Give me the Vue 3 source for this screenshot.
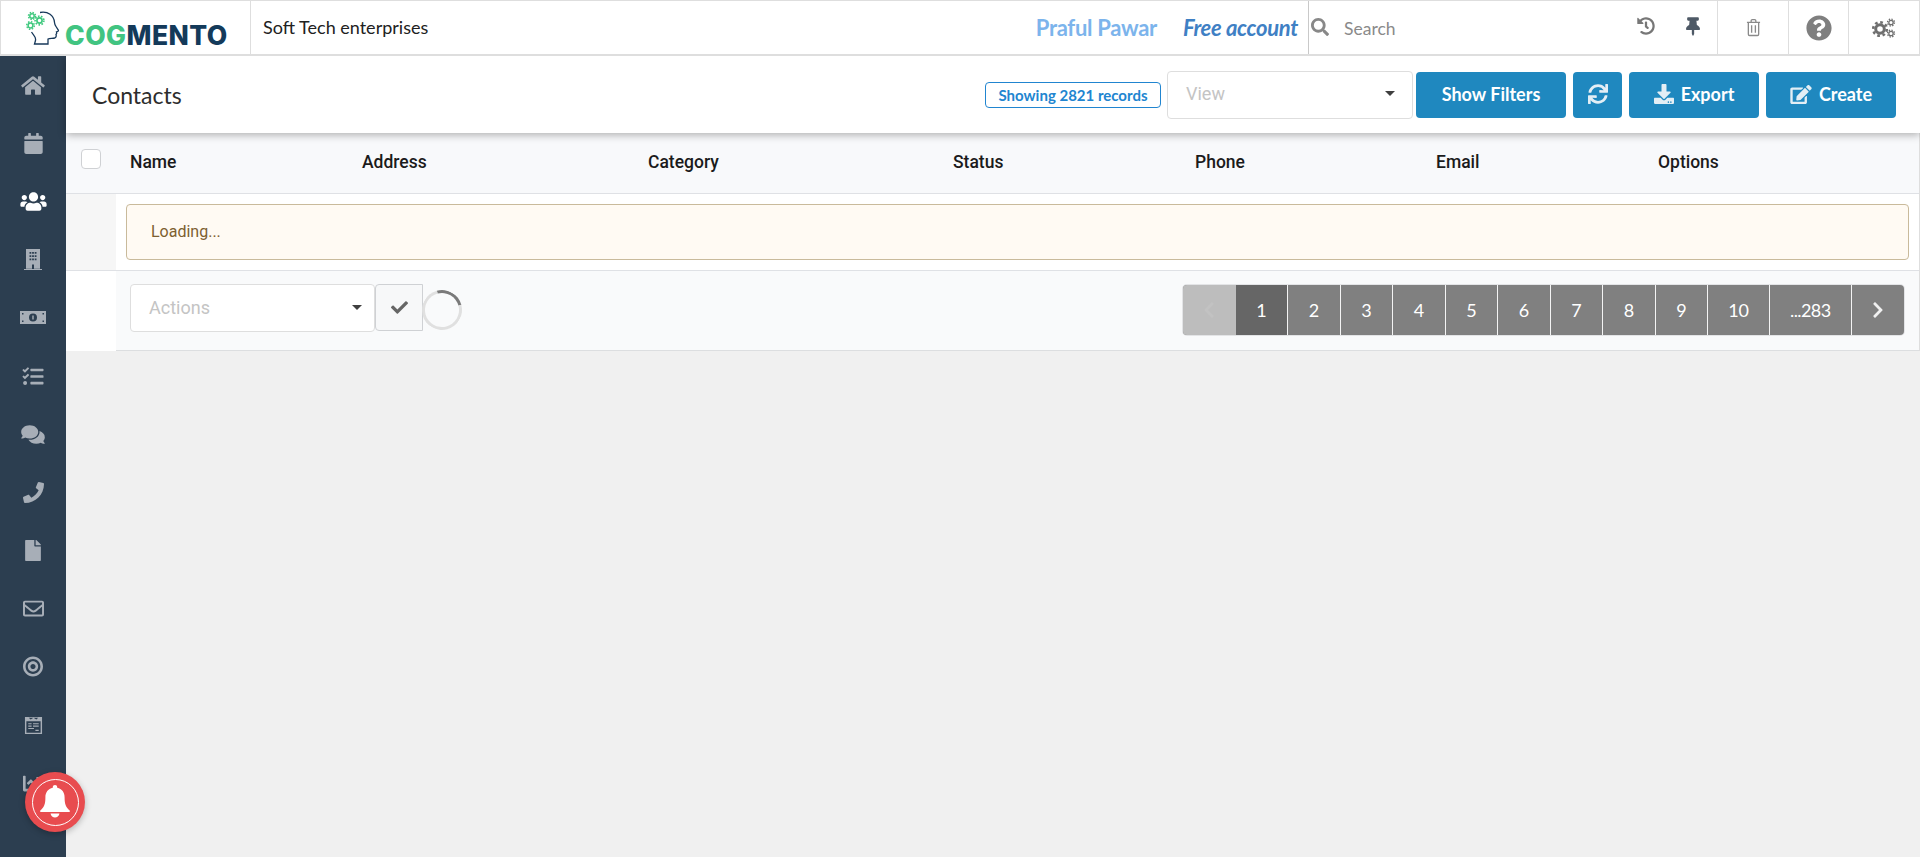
<script setup>
const columns = [
  { name: 'Name' }, { name: 'Address' }, { name: 'Category' }, { name: 'Status' },
  { name: 'Phone' }, { name: 'Email' }, { name: 'Options' }
]
const pages = ['1', '2', '3', '4', '5', '6', '7', '8', '9', '10', '...283']
const nav = [
  { vb: '0 0 576 512', w: 26, d: 'M280.37 148.26L96 300.11V464a16 16 0 0 0 16 16l112.06-.29a16 16 0 0 0 15.92-16V368a16 16 0 0 1 16-16h64a16 16 0 0 1 16 16v95.64a16 16 0 0 0 16 16.05L464 480a16 16 0 0 0 16-16V300L295.67 148.26a12.19 12.19 0 0 0-15.3 0zM571.6 251.47L488 182.56V44.05a12 12 0 0 0-12-12h-56a12 12 0 0 0-12 12v72.61L318.47 43a48 48 0 0 0-61 0L4.34 251.47a12 12 0 0 0-1.6 16.9l25.5 31A12 12 0 0 0 45.15 301l235.22-193.74a12.19 12.19 0 0 1 15.3 0L530.9 301a12 12 0 0 0 16.9-1.6l25.5-31a12 12 0 0 0-1.7-16.93z' },
  { vb: '0 0 448 512', w: 19, d: 'M12 192h424c6.6 0 12 5.4 12 12v260c0 26.5-21.5 48-48 48H48c-26.5 0-48-21.5-48-48V204c0-6.6 5.4-12 12-12zm436-44v-36c0-26.5-21.5-48-48-48h-48V12c0-6.6-5.4-12-12-12h-40c-6.6 0-12 5.4-12 12v52H160V12c0-6.6-5.4-12-12-12h-40c-6.6 0-12 5.4-12 12v52H48C21.5 64 0 85.5 0 112v36c0 6.6 5.4 12 12 12h424c6.6 0 12-5.4 12-12z' },
  { vb: '0 0 640 512', w: 27, active: true, d: 'M96 224c35.3 0 64-28.7 64-64s-28.7-64-64-64-64 28.7-64 64 28.7 64 64 64zm448 0c35.3 0 64-28.7 64-64s-28.7-64-64-64-64 28.7-64 64 28.7 64 64 64zm32 32h-64c-17.6 0-33.5 7.1-45.1 18.6 40.3 22.1 68.9 62 75.1 109.4h66c17.7 0 32-14.3 32-32v-32c0-35.3-28.7-64-64-64zm-256 0c61.9 0 112-50.1 112-112S381.9 32 320 32 208 82.1 208 144s50.1 112 112 112zm76.8 32h-8.3c-20.8 10-43.9 16-68.5 16s-47.6-6-68.5-16h-8.3C179.6 288 128 339.6 128 403.2V432c0 26.5 21.5 48 48 48h288c26.5 0 48-21.5 48-48v-28.8c0-63.6-51.6-115.2-115.2-115.2zm-223.7-13.4C161.5 263.1 145.6 256 128 256H64c-35.3 0-64 28.7-64 64v32c0 17.7 14.3 32 32 32h65.9c6.3-47.4 34.9-87.3 75.2-109.4z' },
  { vb: '0 0 18 21', w: 18, rule: 'evenodd', d: 'M2 0h14v19.800H2zM5.500 3h1.800v1.800H5.500zM8.100 3h1.800v1.800H8.100zM10.700 3h1.800v1.800h-1.800zM5.500 6.200h1.800V8H5.500zM8.100 6.200h1.800V8H8.100zM10.700 6.200h1.800V8h-1.800zM5.500 9.400h1.800v1.800H5.500zM8.100 9.400h1.800v1.800H8.100zM10.700 9.400h1.800v1.800h-1.800zM8 15.500h2v4.300H8zM0 20h18v1H0z' },
  { vb: '0 0 26 13', w: 26, rule: 'evenodd', d: 'M0 0h26v13H0zM13 2.500a4 4 0 1 0 0 8 4 4 0 0 0 0-8zM12.300 4.500h1.400v4h-1.400zM2 2h1.500v1.500H2zM22.500 2H24v1.500h-1.500zM2 9.500h1.500V11H2zM22.500 9.500H24V11h-1.500z' },
  { vb: '0 0 512 512', w: 22, d: 'M139.61 35.5a12 12 0 0 0-17 0L58.93 98.81l-22.7-22.12a12 12 0 0 0-17 0L3.53 92.41a12 12 0 0 0 0 17l47.59 47.4a12.78 12.78 0 0 0 17.61 0l15.59-15.62L156.52 69a12.09 12.09 0 0 0 .09-17zm0 159.19a12 12 0 0 0-17 0l-63.68 63.72-22.7-22.1a12 12 0 0 0-17 0L3.53 252a12 12 0 0 0 0 17L51 316.5a12.77 12.77 0 0 0 17.6 0l15.7-15.69 72.2-72.22a12 12 0 0 0 .09-16.9zM64 368c-26.49 0-48.59 21.5-48.59 48S37.53 464 64 464a48 48 0 0 0 0-96zm432 16H208a16 16 0 0 0-16 16v32a16 16 0 0 0 16 16h288a16 16 0 0 0 16-16v-32a16 16 0 0 0-16-16zm0-320H208a16 16 0 0 0-16 16v32a16 16 0 0 0 16 16h288a16 16 0 0 0 16-16V80a16 16 0 0 0-16-16zm0 160H208a16 16 0 0 0-16 16v32a16 16 0 0 0 16 16h288a16 16 0 0 0 16-16v-32a16 16 0 0 0-16-16z' },
  { vb: '0 0 576 512', w: 24, d: 'M416 192c0-88.4-93.1-160-208-160S0 103.6 0 192c0 34.3 14.1 65.9 38 92-13.4 30.2-35.5 54.2-35.8 54.5-2.2 2.3-2.8 5.7-1.5 8.7S4.8 352 8 352c36.6 0 66.9-12.3 88.7-25 32.2 15.7 70.3 25 111.3 25 114.9 0 208-71.6 208-160zm122 220c23.9-26 38-57.7 38-92 0-66.9-53.5-124.2-129.3-148.1.9 6.6 1.3 13.3 1.3 20.1 0 105.9-107.7 192-240 192-10.8 0-21.3-.8-31.7-1.9C207.8 439.6 281.8 480 368 480c41 0 79.1-9.2 111.3-25 21.8 12.7 52.1 25 88.7 25 3.2 0 6.1-1.9 7.3-4.8 1.3-2.9.7-6.3-1.5-8.7-.3-.3-22.4-24.2-35.8-54.5z' },
  { vb: '0 0 512 512', w: 21, d: 'M493.4 24.6l-104-24c-11.3-2.6-22.9 3.3-27.5 13.9l-48 112c-4.2 9.8-1.4 21.3 6.9 28l60.6 49.6c-36 76.7-98.9 140.5-177.2 177.2l-49.6-60.6c-6.8-8.3-18.2-11.1-28-6.9l-112 48C3.9 366.5-2 378.1.6 389.4l24 104C27.1 504.2 36.7 512 48 512c256.1 0 464-207.5 464-464 0-11.2-7.7-20.9-18.6-23.4z' },
  { vb: '0 0 384 512', w: 16, d: 'M224 136V0H24C10.7 0 0 10.7 0 24v464c0 13.3 10.7 24 24 24h336c13.3 0 24-10.7 24-24V160H248c-13.2 0-24-10.8-24-24zm160-14.1v6.1H256V0h6.1c6.4 0 12.5 2.5 17 7l97.9 98c4.5 4.5 7 10.6 7 16.9z' },
  { vb: '0 0 512 512', w: 21, d: 'M464 64H48C21.49 64 0 85.49 0 112v288c0 26.51 21.49 48 48 48h416c26.51 0 48-21.49 48-48V112c0-26.51-21.49-48-48-48zm0 48v40.805c-22.422 18.259-58.168 46.651-134.587 106.49-16.841 13.247-50.201 45.072-73.413 44.701-23.208.375-56.579-31.459-73.413-44.701C106.18 199.465 70.425 171.067 48 152.805V112h416zM48 400V214.398c22.914 18.251 55.409 43.862 104.938 82.646 21.857 17.205 60.134 55.186 103.062 54.955 42.717.231 80.509-37.199 103.053-54.947 49.528-38.783 82.032-64.401 104.947-82.653V400H48z' },
  { vb: '0 0 496 512', w: 20, d: 'M248 8C111.03 8 0 119.03 0 256s111.03 248 248 248 248-111.03 248-248S384.97 8 248 8zm0 432c-101.69 0-184-82.29-184-184 0-101.69 82.29-184 184-184 101.69 0 184 82.29 184 184 0 101.69-82.29 184-184 184zm0-312c-70.69 0-128 57.31-128 128s57.31 128 128 128 128-57.31 128-128-57.31-128-128-128zm0 192c-35.29 0-64-28.71-64-64s28.71-64 64-64 64 28.71 64 64-28.71 64-64 64z' },
  { vb: '0 0 20 20', w: 19, rule: 'evenodd', d: 'M1 1h18v18H1zM2.500 5.500h15v12h-15zM5 1.800l2 1.800 3-1.800 3 1.800 2-1.800zM4.500 7.500h3.500v1.200H4.500zM9.500 7.500h6v1.200h-6zM4.500 10h3.500v1.200H4.500zM9.500 10h6v1.200h-6zM4.500 12.500h6v1.200h-6zM12 14.500h3.500v1.200H12z' },
  { vb: '0 0 512 512', w: 21, d: 'M496 384H64V80c0-8.840-7.160-16-16-16H16C7.160 64 0 71.160 0 80v336c0 17.670 14.330 32 32 32h464c8.840 0 16-7.160 16-16v-32c0-8.840-7.160-16-16-16zM464 96H345.940c-21.380 0-32.090 25.850-16.970 40.970l32.400 32.400L288 242.750l-73.370-73.370c-12.500-12.500-32.760-12.500-45.250 0l-68.690 68.690c-6.250 6.250-6.250 16.380 0 22.630l22.620 22.620c6.250 6.250 16.380 6.250 22.630 0L192 237.250l73.370 73.370c12.500 12.500 32.760 12.500 45.250 0l96-96 32.400 32.400c15.120 15.120 40.970 4.410 40.970-16.970V112c.010-8.840-7.150-16-15.990-16z' }
]
</script>

<template>
  <div class="page">
    <header class="topbar">
      <div class="brand">
        <svg class="head" viewBox="0 0 34 34" width="34" height="34" aria-hidden="true">
          <path d="M14 1.500c8-1.500 14 3 14.500 10 .1 1.500.6 2.600 1.500 4l2.300 3.600c.4.700 0 1.300-1.800 1.800.4 1 .3 1.800-.5 2.300.5 1.400.1 3.400-1.200 3.800-2.300.6-5.300.1-6.800 1v5H8.500l1-3.500c.3-1.600 0-3-1.300-4.600L5.500 21" fill="none" stroke="#17385a" stroke-width="1.300"/>
          <g fill="none" stroke="#41c97f">
            <circle cx="6" cy="5" r="2.200" stroke-width="1.500"/>
            <circle cx="6" cy="5" r="3.500" stroke-width="1.500" stroke-dasharray="1.500 1.250"/>
            <circle cx="13.500" cy="9.500" r="2.600" stroke-width="1.700"/>
            <circle cx="13.500" cy="9.500" r="4.400" stroke-width="1.600" stroke-dasharray="1.600 1.500"/>
            <circle cx="4.500" cy="14.500" r="2.400" stroke-width="1.500"/>
            <circle cx="4.500" cy="14.500" r="3.800" stroke-width="1.500" stroke-dasharray="1.500 1.480"/>
          </g>
        </svg>
        <span class="wordmark"><span class="cog">COG</span><span class="mento">MENTO</span></span>
      </div>
      <div class="company">Soft Tech enterprises</div>
      <div class="user">Praful Pawar</div>
      <div class="plan">Free account</div>
      <div class="search">
        <svg class="search-icon" viewBox="0 0 512 512" width="18" height="18" aria-hidden="true"><path d="M505 442.700L405.300 343c-4.500-4.500-10.600-7-17-7H372c27.600-35.300 44-79.700 44-128C416 93.100 322.900 0 208 0S0 93.100 0 208s93.100 208 208 208c48.300 0 92.700-16.400 128-44v16.300c0 6.400 2.500 12.500 7 17l99.700 99.700c9.400 9.400 24.600 9.400 33.900 0l28.300-28.300c9.400-9.400 9.400-24.600.1-34zM208 336c-70.700 0-128-57.200-128-128 0-70.700 57.200-128 128-128 70.700 0 128 57.200 128 128 0 70.700-57.200 128-128 128z"/></svg>
        <span class="search-text">Search</span>
        <svg class="history" viewBox="0 0 512 512" width="18" height="18" aria-hidden="true"><path d="M504 255.531c.253 136.640-111.180 248.372-247.820 248.468-59.015.042-113.223-20.530-155.822-54.911-11.077-8.940-11.905-25.541-1.839-35.607l11.267-11.267c8.609-8.609 22.353-9.551 31.891-1.984C173.062 425.135 212.781 440 256 440c101.705 0 184-82.311 184-184 0-101.705-82.311-184-184-184-48.814 0-93.149 18.969-126.068 49.932l50.754 50.754c10.080 10.080 2.941 27.314-11.313 27.314H24c-8.837 0-16-7.163-16-16V38.627c0-14.254 17.234-21.393 27.314-11.314l49.372 49.372C129.209 34.136 189.552 8 256 8c136.810 0 247.747 110.780 248 247.531zm-180.912 78.784l9.823-12.630c8.138-10.463 6.253-25.542-4.210-33.679L288 256.349V152c0-13.255-10.745-24-24-24h-16c-13.255 0-24 10.745-24 24v135.651l65.409 50.874c10.463 8.137 25.541 6.253 33.679-4.210z"/></svg>
        <svg class="pin" viewBox="0 0 384 512" width="14" height="19" aria-hidden="true"><path d="M298.028 214.267L285.793 96H328c13.255 0 24-10.745 24-24V24c0-13.255-10.745-24-24-24H56C42.745 0 32 10.745 32 24v48c0 13.255 10.745 24 24 24h42.207L85.972 214.267C37.465 236.820 0 277.261 0 328c0 13.255 10.745 24 24 24h136v104.007c0 1.242.289 2.467.845 3.578l24 48c2.941 5.882 11.364 5.893 14.311 0l24-48a8.008 8.008 0 0 0 .845-3.578V352h136c13.255 0 24-10.745 24-24-.001-51.183-37.983-91.420-85.973-113.733z"/></svg>
      </div>
      <div class="tool tool-trash">
        <svg viewBox="0 0 16 20" width="15" height="19" fill="none" stroke="#8a8a8a" stroke-width="1.400" aria-hidden="true"><path d="M1 4.500h14M5.500 4.500V2.800c0-.8.500-1.300 1.300-1.300h2.400c.8 0 1.300.5 1.300 1.300v1.700M2.500 4.500v12.700c0 .8.500 1.300 1.300 1.300h8.400c.8 0 1.300-.5 1.300-1.300V4.500M6 7.500v8M10 7.500v8"/></svg>
      </div>
      <div class="tool tool-help">
        <svg viewBox="0 0 512 512" width="26" height="26" fill="#7f7f7f" aria-hidden="true"><path d="M504 256c0 136.997-111.043 248-248 248S8 392.997 8 256C8 119.083 119.043 8 256 8s248 111.083 248 248zM262.655 90c-54.497 0-89.255 22.957-116.549 63.758-3.536 5.286-2.353 12.415 2.715 16.258l34.699 26.310c5.205 3.947 12.621 3.008 16.665-2.122 17.864-22.658 30.113-35.797 57.303-35.797 20.429 0 45.698 13.148 45.698 32.958 0 14.976-12.363 22.667-32.534 33.976C247.128 238.528 216 254.941 216 296v4c0 6.627 5.373 12 12 12h56c6.627 0 12-5.373 12-12v-1.333c0-28.462 83.186-29.647 83.186-106.667 0-58.002-60.165-102-116.531-102zM256 338c-25.365 0-46 20.635-46 46 0 25.364 20.635 46 46 46s46-20.636 46-46c0-25.365-20.635-46-46-46z"/></svg>
      </div>
      <div class="tool tool-cogs">
        <svg viewBox="0 0 24 20" width="24" height="20" fill="none" stroke="#6f6f6f" aria-hidden="true">
          <circle cx="8" cy="11" r="4.300" stroke-width="3"/>
          <circle cx="8" cy="11" r="6.800" stroke-width="2.600" stroke-dasharray="2.700 2.640"/>
          <circle cx="19" cy="4.500" r="2.200" stroke-width="1.300"/>
          <circle cx="19" cy="4.500" r="3.500" stroke-width="1.300" stroke-dasharray="1.400 1.350"/>
          <circle cx="19" cy="15.500" r="2.200" stroke-width="1.300"/>
          <circle cx="19" cy="15.500" r="3.500" stroke-width="1.300" stroke-dasharray="1.400 1.350"/>
        </svg>
      </div>
    </header>

    <div class="body">
      <aside class="sidebar">
        <div v-for="(item, i) in nav" :key="i" class="nav-item" :class="{ active: item.active }">
          <svg :viewBox="item.vb" :width="item.w" height="21" aria-hidden="true"><path :d="item.d" :fill-rule="item.rule"/></svg>
        </div>
      </aside>

      <main class="main">
        <section class="titlebar">
          <h1 class="title">Contacts</h1>
          <div class="title-actions">
            <span class="badge">Showing 2821 records</span>
            <div class="select view-select"><span>View</span><i class="caret"></i></div>
            <button class="btn filters">Show Filters</button>
            <button class="btn refresh">
              <svg viewBox="0 0 512 512" width="20" height="20" aria-hidden="true"><path d="M440.650 12.570l4 82.770A247.160 247.160 0 0 0 255.830 8C134.730 8 33.910 94.920 12.290 209.820A12 12 0 0 0 24.090 224h49.050a12 12 0 0 0 11.670-9.260 175.910 175.910 0 0 1 317-56.940l-101.460-4.860a12 12 0 0 0-12.570 12v47.410a12 12 0 0 0 12 12H500a12 12 0 0 0 12-12V12a12 12 0 0 0-12-12h-47.370a12 12 0 0 0-11.980 12.570zM255.830 432a175.610 175.610 0 0 1-146-77.800l101.800 4.870a12 12 0 0 0 12.570-12v-47.400a12 12 0 0 0-12-12H12a12 12 0 0 0-12 12V500a12 12 0 0 0 12 12h47.350a12 12 0 0 0 12-12.600l-4.150-82.570A247.170 247.170 0 0 0 255.830 504c121.110 0 221.930-86.920 243.550-201.820a12 12 0 0 0-11.800-14.180h-49.050a12 12 0 0 0-11.670 9.260A175.860 175.860 0 0 1 255.830 432z"/></svg>
            </button>
            <button class="btn export">
              <svg viewBox="0 0 512 512" width="20" height="20" aria-hidden="true"><path d="M216 0h80c13.300 0 24 10.700 24 24v168h87.700c17.800 0 26.700 21.500 14.100 34.100L269.700 378.300c-7.500 7.500-19.800 7.500-27.300 0L90.100 226.100c-12.600-12.600-3.700-34.100 14.100-34.100H192V24c0-13.300 10.700-24 24-24zm296 376v112c0 13.300-10.700 24-24 24H24c-13.300 0-24-10.700-24-24V376c0-13.300 10.700-24 24-24h146.700l49 49c20.100 20.100 52.500 20.100 72.600 0l49-49H488c13.300 0 24 10.700 24 24zm-124 88c0-11-9-20-20-20s-20 9-20 20 9 20 20 20 20-9 20-20zm64 0c0-11-9-20-20-20s-20 9-20 20 9 20 20 20 20-9 20-20z"/></svg>
              Export
            </button>
            <button class="btn create">
              <svg viewBox="0 0 576 512" width="22" height="19" aria-hidden="true"><path d="M402.600 83.200l90.200 90.200c3.800 3.800 3.800 10 0 13.800L274.400 405.600l-92.800 10.300c-12.400 1.400-22.900-9.100-21.500-21.500l10.300-92.800L388.800 83.200c3.800-3.800 10-3.800 13.800 0zm162-22.900l-48.800-48.800c-15.200-15.200-39.900-15.200-55.200 0l-35.400 35.400c-3.800 3.800-3.800 10 0 13.800l90.200 90.200c3.800 3.800 10 3.800 13.800 0l35.400-35.400c15.200-15.300 15.200-40 0-55.200zM384 346.200V448H64V128h229.800c3.200 0 6.200-1.300 8.500-3.500l40-40c7.600-7.600 2.200-20.500-8.500-20.500H48C21.500 64 0 85.500 0 112v352c0 26.500 21.500 48 48 48h352c26.500 0 48-21.500 48-48V306.200c0-10.700-12.900-16-20.500-8.500l-40 40c-2.200 2.300-3.500 5.300-3.500 8.500z"/></svg>
              Create
            </button>
          </div>
        </section>

        <section class="table">
          <div class="thead">
            <div class="check-cell"><span class="checkbox"></span></div>
            <div v-for="c in columns" :key="c.name" class="th">{{ c.name }}</div>
          </div>
          <div class="loading-row">
            <div class="gutter"></div>
            <div class="loading-cell"><div class="alert">Loading...</div></div>
          </div>
          <div class="tfoot">
            <div class="foot-gutter"></div>
            <div class="foot-main">
              <div class="select actions-select"><span>Actions</span><i class="caret"></i></div>
              <button class="apply">
                <svg viewBox="0 0 512 512" width="17" height="17" aria-hidden="true"><path d="M173.898 439.404l-166.400-166.400c-9.997-9.997-9.997-26.206 0-36.204l36.203-36.204c9.997-9.998 26.207-9.998 36.204 0L192 312.690 432.095 72.596c9.997-9.997 26.207-9.997 36.204 0l36.203 36.204c9.997 9.997 9.997 26.206 0 36.204l-294.400 294.401c-9.998 9.997-26.207 9.997-36.204-.001z"/></svg>
              </button>
              <div class="spinner"></div>
              <nav class="pagination">
                <span class="page-item prev">
                  <svg viewBox="0 0 320 512" width="12" height="18" aria-hidden="true"><path transform="matrix(-1 0 0 1 320 0)" d="M285.476 272.971L91.132 467.314c-9.373 9.373-24.569 9.373-33.941 0l-22.667-22.667c-9.357-9.357-9.375-24.522-.04-33.901L188.505 256 34.484 101.255c-9.335-9.379-9.317-24.544.04-33.901l22.667-22.667c9.373-9.373 24.569-9.373 33.941 0L285.475 239.030c9.373 9.372 9.373 24.568.001 33.941z"/></svg>
                </span>
                <span v-for="(p, i) in pages" :key="p" class="page-item" :class="{ current: i === 0, far: i === 10 }">{{ p }}</span>
                <span class="page-item next">
                  <svg viewBox="0 0 320 512" width="12" height="18" aria-hidden="true"><path d="M285.476 272.971L91.132 467.314c-9.373 9.373-24.569 9.373-33.941 0l-22.667-22.667c-9.357-9.357-9.375-24.522-.04-33.901L188.505 256 34.484 101.255c-9.335-9.379-9.317-24.544.04-33.901l22.667-22.667c9.373-9.373 24.569-9.373 33.941 0L285.475 239.030c9.373 9.372 9.373 24.568.001 33.941z"/></svg>
                </span>
              </nav>
            </div>
          </div>
        </section>
      </main>
    </div>

    <div class="notify">
      <div class="notify-ring">
        <svg viewBox="0 0 30 34" width="30" height="34" aria-hidden="true"><path d="M15 0c1.300 0 2.200.9 2.200 2.200v.6C22 3.800 24.600 7.400 24.600 12.500c0 6.800 1.300 9.800 5 12.900.7.600.4 1.600-.6 1.600H1c-1 0-1.300-1-.6-1.600 3.700-3.100 5-6.100 5-12.900 0-5.100 2.600-8.700 7.400-9.700v-.6C12.800.9 13.700 0 15 0zM10.500 28.500h9c-.5 2.500-2.400 4-4.500 4s-4-1.500-4.500-4z"/></svg>
      </div>
    </div>
  </div>
</template>

<style>
html, body { margin: 0; padding: 0; background: #f0f0f0; }
</style>

<style scoped>
.page {
  position: relative;
  height: 857px;
  overflow: hidden;
  background: #f0f0f0;
  font-family: "Lato", "Liberation Sans", sans-serif;
  color: #212121;
}
.topbar {
  display: flex;
  align-items: stretch;
  box-sizing: border-box;
  height: 56px;
  background: #fff;
  border: 1px solid #dedede;
  border-bottom-width: 2px;
  position: relative;
  z-index: 3;
}
.brand {
  display: flex;
  align-items: flex-start;
  box-sizing: border-box;
  width: 250px;
  padding: 10px 0 0 25px;
  border-right: 1px solid #dedede;
}
.head { flex: none; }
.wordmark {
  margin: 9px 0 0 5px;
  font-family: "Inter", "Liberation Sans", sans-serif;
  font-size: 26.5px;
  font-weight: 800;
  line-height: 30px;
  letter-spacing: 0.45px;
}
.cog { color: #41c481; }
.mento { color: #143a5a; }
.company {
  flex: 1;
  display: flex;
  align-items: center;
  padding: 0 0 2px 12px;
  font-size: 18px;
  color: #212121;
}
.user, .plan {
  display: flex;
  align-items: center;
  font-size: 22px;
  font-weight: 700;
}
.user { color: #7cb4ec; letter-spacing: -0.3px; margin-right: 26px; }
.plan { color: #3f80c4; font-style: italic; letter-spacing: -0.3px; margin-right: 10px; }
.search {
  display: flex;
  align-items: center;
  box-sizing: border-box;
  width: 410px;
  padding-left: 2px;
  border-left: 1px solid #c9c9c9;
  border-right: 1px solid #dedede;
  color: #808080;
}
.search-icon { fill: #888; margin: -1px 0 0 0; }
.search-text { margin-left: 15px; padding-top: 1px; font-size: 17.500px; color: #8a8a8a; flex: 1; }
.history { fill: #777; margin: -3px 31px 0 0; }
.pin { fill: #4e5966; margin: -3px 17px 0 0; }
.tool {
  display: flex;
  align-items: center;
  justify-content: center;
  box-sizing: border-box;
  border-right: 1px solid #dedede;
}
.tool-trash { width: 71px; }
.tool-help { width: 60px; }
.tool-cogs { width: 70px; border-right: none; }

.body { display: flex; height: 801px; }
.sidebar {
  flex: none;
  width: 66px;
  background: #2c3e50;
}
.nav-item {
  display: flex;
  align-items: center;
  justify-content: center;
  height: 58.2px;
  fill: #a7aeb7;
}
.nav-item.active { fill: #fff; }
.main { flex: 1; min-width: 0; }
.titlebar {
  position: relative;
  z-index: 2;
  display: flex;
  align-items: center;
  justify-content: space-between;
  box-sizing: border-box;
  height: 77px;
  padding: 0 24px 0 26px;
  background: #fff;
  box-shadow: 0 2px 8px rgba(0, 0, 0, 0.3);
}
.title {
  margin: 0;
  font-size: 23px;
  font-weight: 400;
  color: #2d2d2d;
}
.title-actions { display: flex; align-items: center; }
.badge {
  display: flex;
  align-items: center;
  justify-content: center;
  box-sizing: border-box;
  width: 176px;
  height: 26px;
  margin-right: 6px;
  border: 1px solid #2185d0;
  border-radius: 4px;
  font-size: 15px;
  font-weight: 700;
  color: #2185d0;
  white-space: nowrap;
}
.select {
  display: flex;
  align-items: center;
  justify-content: space-between;
  box-sizing: border-box;
  background: #fff;
  border: 1px solid #dedede;
  border-radius: 4px;
  color: #c4c4c4;
}
.view-select {
  width: 246px;
  height: 48px;
  margin-right: 3px;
  padding: 0 17px 2px 18px;
  font-family: "Roboto", sans-serif;
  font-size: 18px;
}
.caret {
  width: 0;
  height: 0;
  border-left: 5px solid transparent;
  border-right: 5px solid transparent;
  border-top: 5px solid #3f3f3f;
}
.btn {
  display: flex;
  align-items: center;
  justify-content: center;
  gap: 7px;
  box-sizing: border-box;
  height: 46px;
  padding: 0 0 1px;
  border: 0;
  border-radius: 4px;
  background: #1f88bf;
  color: #fff;
  fill: #e3eef5;
  font-family: "Lato", sans-serif;
  font-size: 18px;
  font-weight: 700;
}
.filters { width: 150px; margin-right: 7px; }
.refresh { width: 49px; margin-right: 7px; }
.export { width: 130px; margin-right: 7px; }
.create { width: 130px; }

.table { border-right: 1px solid #dedede; }
.thead {
  display: grid;
  grid-template-columns: 64px 232px 286px 305px 242px 241px 222px 1fr;
  align-items: center;
  box-sizing: border-box;
  height: 61px;
  background: #f8f9fb;
  border-bottom: 1px solid #dfe1e5;
}
.check-cell { display: flex; padding: 0 0 8px 15px; }
.checkbox {
  display: block;
  width: 20px;
  height: 20px;
  box-sizing: border-box;
  background: #fff;
  border: 1px solid #cfd1d4;
  border-radius: 4px;
}
.th {
  padding-bottom: 3px;
  font-family: "Roboto", sans-serif;
  font-size: 17.500px;
  font-weight: 500;
  color: #1b1b1b;
}
.loading-row {
  display: flex;
  height: 77px;
  box-sizing: border-box;
  border-bottom: 1px solid #dfe1e5;
  background: #fff;
}
.gutter { flex: none; width: 50px; background: #f6f6f6; }
.loading-cell { flex: 1; padding: 10px; min-width: 0; }
.alert {
  display: flex;
  align-items: center;
  box-sizing: border-box;
  height: 56px;
  padding: 0 24px 2px;
  background: #fffaf3;
  border: 1px solid #c9ba9b;
  border-radius: 4px;
  font-family: "Roboto", sans-serif;
  font-size: 16px;
  color: #7d5f30;
}
.tfoot { display: flex; height: 80px; }
.foot-gutter { flex: none; width: 50px; background: #fff; }
.foot-main {
  flex: 1;
  display: flex;
  align-items: flex-start;
  box-sizing: border-box;
  padding: 13px 15px 0 14px;
  background: #f9fafb;
  border-bottom: 1px solid #dcdee0;
}
.actions-select {
  flex: none;
  width: 245px;
  height: 48px;
  padding: 0 12px 2px 18px;
  font-family: "Roboto", sans-serif;
  font-size: 18px;
}
.apply {
  flex: none;
  display: flex;
  align-items: center;
  justify-content: center;
  box-sizing: border-box;
  width: 48px;
  height: 47px;
  padding: 0;
  background: #f7f8f9;
  border: 1px solid #cfd1d4;
  border-radius: 4px 0 0 4px;
  fill: #666;
}
.spinner {
  flex: none;
  box-sizing: border-box;
  width: 40px;
  height: 40px;
  margin: 6px 0 0 -1px;
  border: 3px solid #e0e0e0;
  border-top-color: #7a7a7a;
  border-radius: 50%;
  transform: rotate(30deg);
}
.pagination {
  display: flex;
  height: 50px;
  margin: 1px 0 0 auto;
  border-radius: 4px;
  overflow: hidden;
  background: #808080;
  box-shadow: 0 0 0 1px #e3e4e6;
}
.page-item {
  display: flex;
  align-items: center;
  justify-content: center;
  box-sizing: border-box;
  min-width: 52.5px;
  padding: 0 20px 1px;
  border-right: 1px solid #f4f4f4;
  font-size: 18px;
  color: #fff;
  fill: #f0f0f0;
}
.far { letter-spacing: -0.6px; }
.prev { background: #bdbdbd; border-right: none; fill: #c2c2c2; padding: 0; }
.current { background: #666; }
.next { border-right: none; padding: 0; }

.notify {
  position: absolute;
  left: 25px;
  top: 772px;
  display: flex;
  align-items: center;
  justify-content: center;
  width: 60px;
  height: 60px;
  border-radius: 50%;
  background: #e84c4f;
  box-shadow: 0 2px 6px rgba(0, 0, 0, 0.25);
  z-index: 5;
}
.notify-ring {
  display: flex;
  align-items: center;
  justify-content: center;
  box-sizing: border-box;
  width: 47px;
  height: 47px;
  border: 1.500px solid #fff;
  border-radius: 50%;
  fill: #fff;
}
</style>
